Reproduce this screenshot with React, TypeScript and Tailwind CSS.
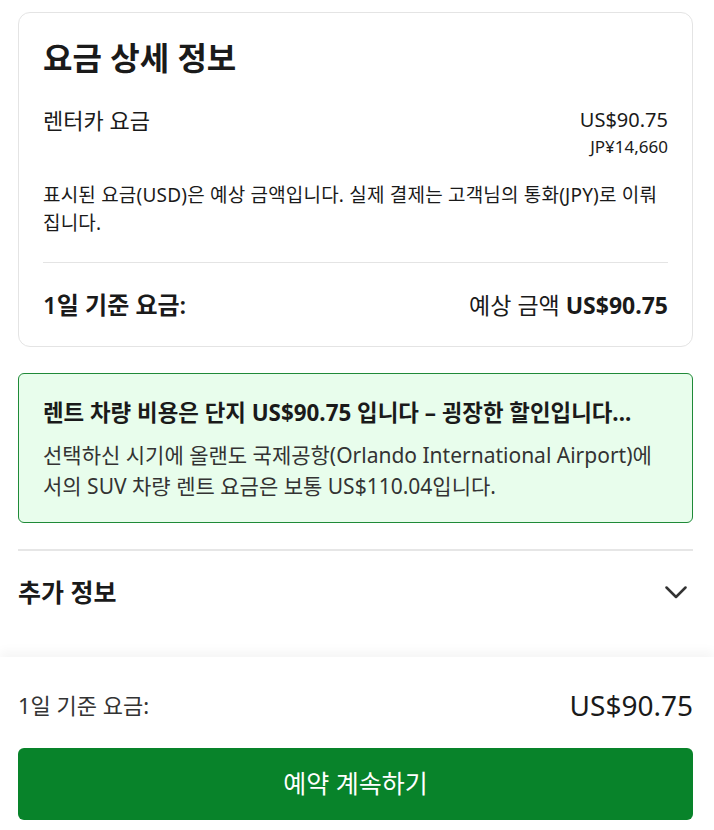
const font = { fontFamily: '"Noto Sans", "Noto Sans CJK KR", sans-serif' }

function PriceCard() {
  return (
    <section className="rounded-xl border border-[#e4e4e4] bg-white px-6 pt-[23px] pb-[25px]">
      <h2 className="text-[32px] font-bold leading-[44px] text-[#1a1a1a]">요금 상세 정보</h2>
      <div className="mt-[26px] flex items-start justify-between">
        <span className="text-[22px] leading-[28px] text-[#1a1a1a]">렌터카 요금</span>
        <div className="flex flex-col items-end">
          <span className="text-[20px] leading-[28px] text-[#1a1a1a]">US$90.75</span>
          <span className="mt-[1px] text-[17px] leading-[24px] text-[#1a1a1a]">JP¥14,660</span>
        </div>
      </div>
      <p className="mt-[22px] text-[19px] leading-[28px] tracking-[0.2px] text-[#1a1a1a]">
        표시된 요금(USD)은 예상 금액입니다. 실제 결제는 고객님의 통화(JPY)로 이뤄집니다.
      </p>
      <div className="mt-[25px] h-px bg-[#e4e4e4]" />
      <div className="mt-[26px] flex items-center justify-between">
        <span className="text-[24px] font-semibold leading-[32px] text-[#1a1a1a]">1일 기준 요금:</span>
        <span className="text-[23px] leading-[32px] text-[#1a1a1a]">
          예상 금액 <span className="font-bold">US$90.75</span>
        </span>
      </div>
    </section>
  )
}

function DealBox() {
  return (
    <section className="mt-[26px] rounded-md border border-[#1f8a38] bg-[#e8fdec] px-6 pt-[24px] pb-[20px]">
      <p className="text-[22.4px] font-bold leading-[30px] text-[#1a1a1a]">
        렌트 차량 비용은 단지 US$90.75 입니다 – 굉장한 할인입니다...
      </p>
      <p className="mt-[12px] text-[21px] leading-[31px] text-[#333]">
        선택하신 시기에 올랜도 국제공항(Orlando International Airport)에서의 SUV 차량 렌트 요금은 보통 US$110.04입니다.
      </p>
    </section>
  )
}

export default function App() {
  return (
    <div className="flex h-screen flex-col bg-white" style={font}>
      <main className="flex-1 overflow-hidden pl-[18px] pr-[21px] pt-3">
        <PriceCard />
        <DealBox />
        <div className="mt-[26px] h-[2px] bg-[#e6e6e6]" />
        <button className="flex w-full items-center justify-between pt-[24px]">
          <span className="text-[25px] font-bold leading-[34px] text-[#1a1a1a]">추가 정보</span>
          <svg className="mr-[6px]" width="22" height="13" viewBox="0 0 22 13" fill="none">
            <polyline points="1.5 1.5 11 11 20.5 1.5" stroke="#333" strokeWidth="2.5" strokeLinecap="round" strokeLinejoin="round" />
          </svg>
        </button>
      </main>
      <footer className="h-[173px] bg-white pl-[18px] pr-[21px] pt-[30px] shadow-[0_-6px_10px_rgba(0,0,0,0.04)]">
        <div className="flex items-center justify-between">
          <span className="text-[22px] leading-[36px] text-[#333]">1일 기준 요금:</span>
          <span className="text-[28px] leading-[36px] text-[#1a1a1a]">US$90.75</span>
        </div>
        <button className="mt-[25px] flex h-[72px] w-full items-center justify-center rounded-md bg-[#08832a] text-[25px] text-white">
          예약 계속하기
        </button>
      </footer>
    </div>
  )
}
